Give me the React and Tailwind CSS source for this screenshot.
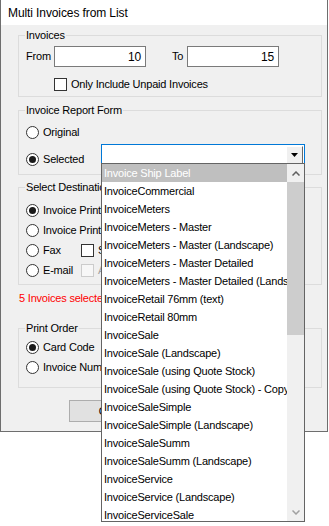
import React from 'react';

const items = [
    'Invoice Ship Label',
    'InvoiceCommercial',
    'InvoiceMeters',
    'InvoiceMeters - Master',
    'InvoiceMeters - Master (Landscape)',
    'InvoiceMeters - Master Detailed',
    'InvoiceMeters - Master Detailed (Landscape)',
    'InvoiceRetail 76mm (text)',
    'InvoiceRetail 80mm',
    'InvoiceSale',
    'InvoiceSale (Landscape)',
    'InvoiceSale (using Quote Stock)',
    'InvoiceSale (using Quote Stock) - Copy',
    'InvoiceSaleSimple',
    'InvoiceSaleSimple (Landscape)',
    'InvoiceSaleSumm',
    'InvoiceSaleSumm (Landscape)',
    'InvoiceService',
    'InvoiceService (Landscape)',
    'InvoiceServiceSale',
];

function Radio({ checked }) {
    return (
        <span className="flex h-[13px] w-[13px] shrink-0 items-center justify-center rounded-full border border-[#333333] bg-white">
            {checked && <span className="h-[7px] w-[7px] rounded-full bg-[#1a1a1a]"></span>}
        </span>
    );
}

function Check({ disabled }) {
    return (
        <span
            className={
                disabled
                    ? 'h-[13px] w-[13px] shrink-0 border border-[#cccccc] bg-[#f7f7f7]'
                    : 'h-[13px] w-[13px] shrink-0 border border-[#333333] bg-white'
            }
        ></span>
    );
}

function RadioRow({ checked, label }) {
    return (
        <div className="flex h-[20px] items-center gap-[4px] whitespace-nowrap">
            <Radio checked={checked} />
            <span>{label}</span>
        </div>
    );
}

function Group({ title, className, children }) {
    return (
        <fieldset className={'ml-[17px] w-[304px] border border-[#dcdcdc] px-[7px] ' + className}>
            <legend className="-ml-[1px] px-[1px] leading-[13px]">{title}</legend>
            {children}
        </fieldset>
    );
}

export default function App() {
    return (
        <div className="relative h-[526px] w-[329px] overflow-hidden bg-white font-['Liberation_Sans',Arial,sans-serif] text-[11px] tracking-[-0.2px] text-black">
            {/* Dialog window */}
            <div className="w-[328px] border-x border-b border-[#6e6e6e]">
                <div className="flex h-[25px] items-center bg-white pl-[7px] text-[12px] tracking-[-0.1px]">Multi Invoices from List</div>

                <div className="bg-[#f0f0f0] pt-[4px] pb-[9px]">
                    {/* Invoices */}
                    <Group title="Invoices" className="h-[68px]">
                        <div className="mt-[4px] flex h-[21px] items-center">
                            <span className="w-[28px]">From</span>
                            <div className="flex h-[21px] w-[92px] items-center justify-end border border-[#7a7a7a] bg-white pr-[4px] text-[12px]">10</div>
                            <span className="ml-[26px] w-[15px]">To</span>
                            <div className="flex h-[21px] w-[92px] items-center justify-end border border-[#7a7a7a] bg-white pr-[4px] text-[12px]">15</div>
                        </div>
                        <div className="mt-[9px] ml-[28px] flex items-center gap-[4px]">
                            <Check />
                            <span>Only Include Unpaid Invoices</span>
                        </div>
                    </Group>

                    {/* Invoice Report Form */}
                    <Group title="Invoice Report Form" className="mt-[7px] h-[71px]">
                        <div className="mt-[9px] flex h-[13px] items-center gap-[4px]">
                            <Radio />
                            <span>Original</span>
                        </div>
                        <div className="mt-[5px] flex items-start">
                            <div className="mt-[7px] flex w-[75px] items-center gap-[4px]">
                                <Radio checked />
                                <span>Selected</span>
                            </div>
                            <div className="flex h-[21px] w-[204px] items-center justify-end border border-[#0078d7] bg-white pr-[1px]">
                                <div className="flex h-[18px] w-[17px] items-center justify-center border-t border-l border-t-white border-l-white border-r border-b border-r-[#696969] border-b-[#696969] bg-[#f0f0f0]">
                                    <svg width="7" height="4" viewBox="0 0 7 4">
                                        <path d="M0 0h7L3.5 4z" fill="#000" />
                                    </svg>
                                </div>
                            </div>
                        </div>
                    </Group>

                    {/* Select Destination */}
                    <Group title="Select Destination" className="mt-[6px] h-[104px]">
                        <div className="mt-[6px]">
                            <RadioRow checked label="Invoice Printer" />
                            <RadioRow label="Invoice Print Preview" />
                            <div className="flex h-[20px] items-center">
                                <div className="flex w-[55px] items-center gap-[4px]">
                                    <Radio />
                                    <span>Fax</span>
                                </div>
                                <div className="flex items-center gap-[4px]">
                                    <Check />
                                    <span>Send Fax</span>
                                </div>
                            </div>
                            <div className="flex h-[20px] items-center">
                                <div className="flex w-[55px] items-center gap-[4px]">
                                    <Radio />
                                    <span>E-mail</span>
                                </div>
                                <div className="flex items-center gap-[4px] text-[#a0a0a0]">
                                    <Check disabled />
                                    <span>Attach PDF</span>
                                </div>
                            </div>
                        </div>
                    </Group>

                    <div className="mt-[7px] ml-[18px] leading-[13px] text-[#ff0000]">5 Invoices selected</div>

                    {/* Print Order */}
                    <Group title="Print Order" className="mt-[17px] h-[66px]">
                        <div className="mt-[2px]">
                            <RadioRow checked label="Card Code" />
                            <RadioRow label="Invoice Number" />
                        </div>
                    </Group>

                    <div className="mt-[12px] ml-[68px] flex gap-[6px]">
                        <button className="h-[22px] w-[75px] border border-[#adadad] bg-[#e1e1e1]">OK</button>
                        <button className="h-[22px] w-[75px] border border-[#adadad] bg-[#e1e1e1]">Cancel</button>
                    </div>
                </div>
            </div>

            {/* Open drop-down list */}
            <div className="absolute top-[163px] left-[101px] flex h-[359px] w-[204px] border border-[#646464] bg-white">
                <div className="flex-1 overflow-hidden">
                    {items.map((item, i) => (
                        <div
                            key={item}
                            className={
                                i === 0
                                    ? 'flex h-[18px] items-center whitespace-nowrap bg-[#bfbfbf] pl-[2px] text-white'
                                    : 'flex h-[18px] items-center whitespace-nowrap pl-[2px]'
                            }
                        >
                            {item}
                        </div>
                    ))}
                </div>
                <div className="flex w-[17px] flex-col bg-[#f0f0f0]">
                    <div className="flex h-[18px] items-center justify-center">
                        <svg width="8" height="5" viewBox="0 0 8 5">
                            <path d="M0.5 4.5L4 1l3.5 3.5" fill="none" stroke="#606060" strokeWidth="1.5" />
                        </svg>
                    </div>
                    <div className="h-[153px] bg-[#cdcdcd]"></div>
                    <div className="flex-1"></div>
                    <div className="flex h-[18px] items-center justify-center">
                        <svg width="8" height="5" viewBox="0 0 8 5">
                            <path d="M0.5 0.5L4 4l3.5-3.5" fill="none" stroke="#a0a0a0" strokeWidth="1.5" />
                        </svg>
                    </div>
                </div>
            </div>
        </div>
    );
}
